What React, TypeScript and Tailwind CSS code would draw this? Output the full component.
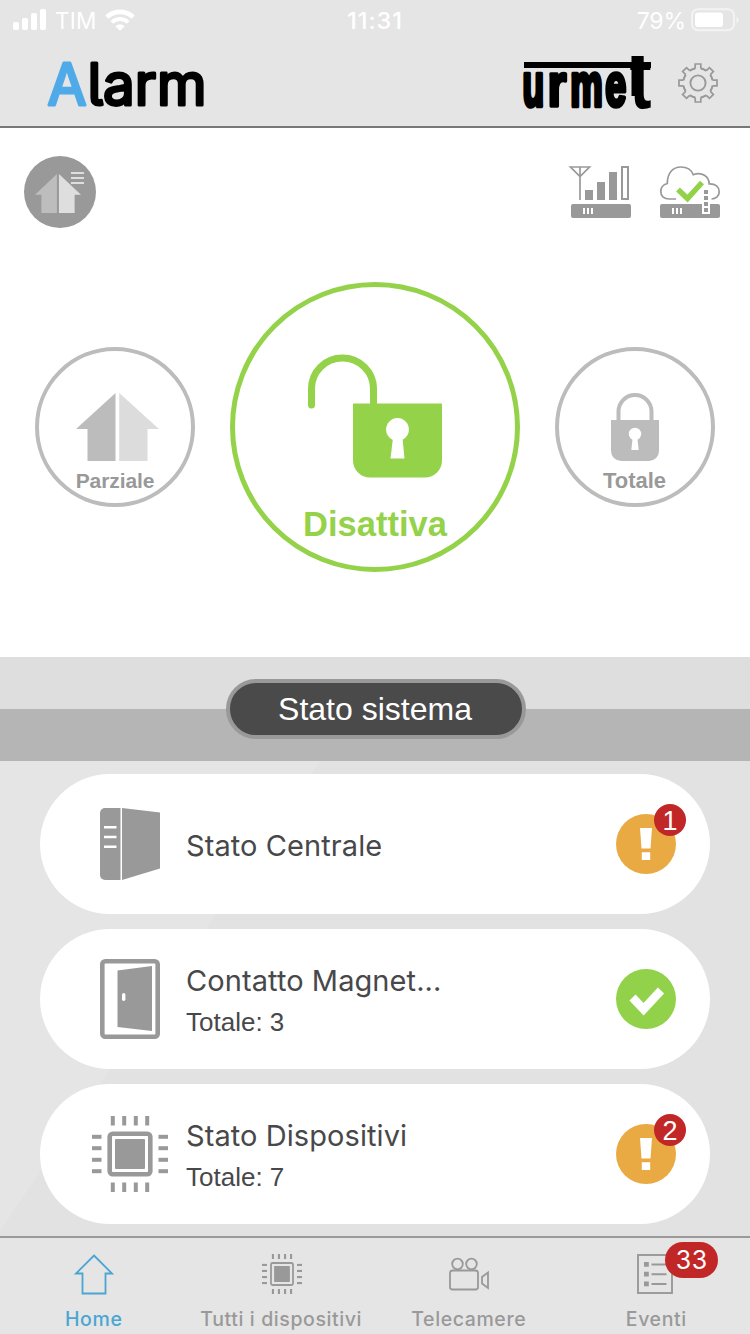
import type { ReactNode } from 'react';

const INTER = "font-['Inter','Noto_Sans',sans-serif]";
const HELV = "font-['Liberation_Sans',Arial,sans-serif]";

function StatusBar() {
  return (
    <div className="flex h-10 items-center text-white">
      <div className="flex w-[250px] items-center pl-3">
        <svg width="36" height="24" viewBox="0 0 36 24" fill="#fff">
          <rect x="1" y="14" width="6" height="8" rx="1.8" />
          <rect x="10" y="10" width="6" height="12" rx="1.8" />
          <rect x="19" y="5" width="6" height="17" rx="1.8" />
          <rect x="28" y="1" width="6" height="21" rx="1.8" />
        </svg>
        <span className="ml-[7px] w-[50px] pt-px text-[22.500px] leading-6 tracking-[0.2px]">TIM</span>
        <svg width="30" height="24" viewBox="0 0 30 24" fill="none" stroke="#fff">
          <path d="M1.8 9.2a19 19 0 0 1 26.400 0" strokeWidth="4.600" />
          <path d="M6.800 14.400a11.500 11.500 0 0 1 16.400 0" strokeWidth="4" />
          <path d="M10.300 18.200a6.800 6.800 0 0 1 9.400 0L15 22.800Z" fill="#fff" stroke="none" />
        </svg>
      </div>
      <div className="w-[250px] pt-[2px] text-center text-[23.500px] font-medium leading-6 tracking-[1px]">11:31</div>
      <div className="flex w-[250px] items-center justify-end pr-[10px]">
        <span className="mr-[4px] pt-[2px] text-[23px] leading-6 tracking-[-0.1px]">79%</span>
        <svg width="50" height="24" viewBox="0 0 50 24">
          <rect x="2" y="1.200" width="42" height="21" rx="6" fill="none" stroke="#f3f3f3" strokeWidth="2" />
          <rect x="5" y="4.500" width="28" height="14.500" rx="3" fill="#fff" />
          <path d="M46.500 8.500c3 1.500 3 5.500 0 7Z" fill="#f3f3f3" />
        </svg>
      </div>
    </div>
  );
}

function AlarmLogo() {
  return (
    <svg className="overflow-visible" width="170" height="60" viewBox="0 0 170 60" fontFamily="Inter, sans-serif" fontSize="58" fontWeight="400" strokeLinejoin="round" strokeWidth="3">
      <text x="7.500" y="52" textLength="39" lengthAdjust="spacingAndGlyphs" fill="#4faae8" stroke="#4faae8">A</text>
      <text className="[font-feature-settings:'cv05']" x="47.500" y="52" textLength="119" lengthAdjust="spacingAndGlyphs" fill="#000" stroke="#000">larm</text>
    </svg>
  );
}

function UrmetLogo() {
  return (
    <svg className="overflow-visible" width="130" height="60" viewBox="0 0 130 60">
      <clipPath id="logo-top">
        <rect x="100" y="3" width="30" height="54" />
      </clipPath>
      <g fontFamily="Liberation Sans, sans-serif" fontWeight="700" fontSize="61" stroke="#000" strokeWidth="4.600" strokeLinejoin="round">
        <text transform="translate(-.6 52.500) scale(.58 1)">u</text>
        <text transform="translate(24.500 52.500) scale(.8 1)" strokeWidth="3.600">r</text>
        <text transform="translate(47.200 52.500) scale(.6 1)">m</text>
        <text transform="translate(82.300 52.500) scale(.62 1)">e</text>
      </g>
      <g clipPath="url(#logo-top)">
        <text transform="translate(106.500 54.500) scale(.76 1)" fontFamily="Liberation Sans, sans-serif" fontWeight="700" fontSize="87">t</text>
      </g>
      <rect x="1" y="9" width="127" height="6" />
      <rect x="108.500" y="3" width="8" height="40" />
    </svg>
  );
}

function Gear() {
  const teeth = [0, 45, 90, 135, 180, 225, 270, 315];
  return (
    <svg width="42" height="42" viewBox="-21 -21 42 42" fill="none" stroke="#999" strokeWidth="1.700">
      <circle r="7.600" strokeWidth="1.900" />
      {teeth.map((a) => (
        <g key={a} transform={`rotate(${a})`}>
          <path d="M-2.800-14.600V-19H2.800V-14.600" />
          <path d="M2.800-14.600Q5.500-14 8.300-12.300" />
          <path d="M-2.800-14.600Q-5.500-14-8.300-12.300" />
        </g>
      ))}
    </svg>
  );
}

function House({ width, height, left, right }: { width: number; height: number; left: string; right: string }) {
  return (
    <svg width={width} height={height} viewBox="0 0 83 68" preserveAspectRatio="none">
      <path d="M39.500 0V68H11.500V36H0Z" fill={left} />
      <path d="M43.200 0V68H71.500V36H83Z" fill={right} />
    </svg>
  );
}

function SignalIcon() {
  return (
    <svg width="64" height="56" viewBox="0 0 64 56" fill="#999">
      <path d="M2.500 3H21.500L12 12.500ZM12 3V36" fill="none" stroke="#999" strokeWidth="1.700" />
      <rect x="17" y="26" width="8" height="10" />
      <rect x="29" y="18" width="8" height="18" />
      <rect x="41" y="8" width="8" height="28" />
      <rect x="54" y="3" width="6" height="32" fill="none" stroke="#999" strokeWidth="2" />
      <rect x="3" y="40" width="60" height="14" rx="2" />
      <path d="M15 44h2v6h-2zM19 44h2v6h-2zM23 44h2v6h-2z" fill="#fff" />
    </svg>
  );
}

function CloudIcon() {
  return (
    <svg width="62" height="56" viewBox="0 0 62 56">
      <path d="M17 35H10.500C4.500 35 1.800 31.500 1.800 27.700C1.800 23.500 4.500 20.500 8.300 19.500C8.300 9 14 3 21.700 3C27.500 3 32.500 6 34.300 10.700C43 7.500 50 12.500 50.200 19.800C56.500 19.500 60.200 23 60.200 27.700C60.200 32 57 35 52.500 35" fill="none" stroke="#999" strokeWidth="1.700" />
      <rect x="1" y="40" width="60" height="14" rx="2" fill="#999" />
      <path d="M13 44h2v6h-2zM17 44h2v6h-2zM21 44h2v6h-2z" fill="#fff" />
      <rect x="43" y="24" width="8" height="26" fill="#fff" />
      <path d="M45 26h4v4h-4zM45 32h4v4h-4zM45 38h4v4h-4zM45 44h4v4h-4z" fill="#999" />
      <path d="M19 25.500 28.500 34.500 43 18.500" fill="none" stroke="#92d14a" strokeWidth="5.500" />
    </svg>
  );
}

function OpenLock() {
  return (
    <svg width="136" height="126" viewBox="0 0 136 126">
      <path d="M4.500 51V34.500a31 30.500 0 0 1 62 0V52" fill="none" stroke="#94d24a" strokeWidth="7" strokeLinecap="round" />
      <path d="M46 49.500h89v57a17 17 0 0 1-17 17H63a17 17 0 0 1-17-17Z" fill="#94d24a" />
      <circle cx="90.500" cy="75.500" r="11.400" fill="#fff" />
      <path d="M86 84h9.500l2 20.500h-14Z" fill="#fff" />
    </svg>
  );
}

function ClosedLock() {
  return (
    <svg width="50" height="70" viewBox="0 0 50 70">
      <path d="M8.500 30V19.500a16.500 16.500 0 0 1 33 0V30" fill="none" stroke="#bcbcbc" strokeWidth="4" />
      <path d="M1 28h48v31a10 10 0 0 1-10 10H11a10 10 0 0 1-10-10Z" fill="#bcbcbc" />
      <circle cx="25" cy="42" r="6.200" fill="#fff" />
      <path d="M22.500 47h5l1.200 11h-7.400Z" fill="#fff" />
    </svg>
  );
}

function PanelIcon() {
  return (
    <svg width="60" height="72" viewBox="0 0 60 72" fill="#999">
      <path d="M20.500 0V72H5a5 5 0 0 1-5-5V5a5 5 0 0 1 5-5Z" />
      <path d="M22 0 60 4.500V60.500L22 72Z" />
      <path d="M4 18h12.500v2.600H4zM4 27.700h12.500v2.600H4zM4 37.400h12.500V40H4z" fill="#fff" />
    </svg>
  );
}

function DoorIcon() {
  return (
    <svg width="60" height="80" viewBox="0 0 60 80" fill="#999">
      <rect x="2.300" y="2.300" width="55.400" height="75.400" rx="3" fill="none" stroke="#999" strokeWidth="4.600" />
      <path d="M17.500 11.500 52 7V72L17.500 68Z" />
      <rect x="22" y="34" width="3.400" height="8" rx="1.700" fill="#fff" />
    </svg>
  );
}

const PINS = [18.800, 30.200, 41.800, 53.200];

function ChipIcon({ size, frame }: { size: number; frame: number }) {
  return (
    <svg width={size} height={size} viewBox="0 0 76 76" fill="#999">
      <rect x={15.400 + frame / 2} y={15.400 + frame / 2} width={45.200 - frame} height={45.200 - frame} rx="3" fill="none" stroke="#999" strokeWidth={frame} />
      <rect x="23" y="23" width="30" height="30" rx="1" />
      {PINS.map((p) => (
        <g key={p}>
          <rect x={p} y="0" width="4" height="9.500" />
          <rect x={p} y="66.500" width="4" height="9.500" />
          <rect x="0" y={p} width="9.500" height="4" />
          <rect x="66.500" y={p} width="9.500" height="4" />
        </g>
      ))}
    </svg>
  );
}

function Warning({ count }: { count: number }) {
  return (
    <div className="relative size-[60px]">
      <svg width="60" height="60" viewBox="0 0 60 60">
        <circle cx="30" cy="30" r="30" fill="#e9aa43" />
        <path d="M24 14h12l-1.500 20.500h-9ZM25.800 38.300h8.400V46h-8.400Z" fill="#fff" />
      </svg>
      <span className={`absolute -top-[10px] left-[38px] flex size-8 items-center justify-center rounded-full bg-[#c22727] pt-px text-[27px] leading-8 text-white ${HELV}`}>{count}</span>
    </div>
  );
}

function Ok() {
  return (
    <svg width="60" height="60" viewBox="0 0 60 60">
      <circle cx="30" cy="30" r="30" fill="#92d14a" />
      <path d="M16.500 28.500 27.600 40.200 45 21.500" fill="none" stroke="#fff" strokeWidth="8.500" />
    </svg>
  );
}

function StatusCard({ icon, title, total, state }: { icon: ReactNode; title: string; total?: string; state: ReactNode }) {
  return (
    <div className="flex h-[140px] items-center rounded-[70px] bg-white pl-[50px] pr-[34px]">
      <div className="flex w-20 justify-center">{icon}</div>
      <div className="ml-4 flex-1 whitespace-nowrap text-[#48484a]">
        <div className={`text-[29px] leading-9 tracking-[0.08px] ${total ? 'pt-[2px]' : 'pt-1'}`}>{title}</div>
        {total && <div className={`mt-[7px] text-[26px] leading-8 ${HELV}`}>{total}</div>}
      </div>
      {state}
    </div>
  );
}

function Tab({ label, active, children }: { label: string; active?: boolean; children: ReactNode }) {
  return (
    <div className={`flex flex-1 flex-col items-center pt-[14px] ${active ? 'text-[#4ba5d3]' : 'text-[#999]'}`}>
      <div className="flex h-[44px] items-center justify-center">{children}</div>
      <span className="mt-[11px] whitespace-nowrap text-[19.500px] font-medium leading-6 tracking-[0.600px]">{label}</span>
    </div>
  );
}

export default function App() {
  return (
    <div className={`flex h-[1334px] w-[750px] flex-col overflow-hidden bg-white ${INTER}`}>
      <header className="h-32 border-b-2 border-[#777] bg-[#e5e5e5]">
        <StatusBar />
        <div className="flex items-start pl-10 pt-[13px]">
          <AlarmLogo />
          <div className="ml-auto flex items-start pr-[31px]">
            <UrmetLogo />
            <div className="ml-[24px] pt-[9px]"><Gear /></div>
          </div>
        </div>
      </header>

      <main className="h-[529px]">
        <div className="flex h-[154px] items-start pl-6 pr-[29px] pt-7">
          <div className="relative flex size-[72px] items-center justify-center rounded-full bg-[#999] pr-[4px] pt-[3px]">
            <House width={46} height={39} left="#bdbdbd" right="#dedede" />
            <svg className="absolute left-[47px] top-4" width="13" height="12" viewBox="0 0 13 12">
              <path d="M0 1h13M0 6h13M0 11h13" stroke="#dedede" strokeWidth="2" />
            </svg>
          </div>
          <div className="ml-auto flex gap-[27px] pt-[8px]">
            <SignalIcon />
            <CloudIcon />
          </div>
        </div>
        <div className={`flex items-center justify-between px-[35px] font-bold ${HELV}`}>
          <div className="flex size-40 flex-col items-center rounded-full border-4 border-[#bcbcbc] pt-[42px]">
            <div className="pl-[4px]"><House width={83} height={68} left="#bcbcbc" right="#dcdcdc" /></div>
            <span className="mt-[8px] text-[21px] leading-6 tracking-[-0.1px] text-[#999]">Parziale</span>
          </div>
          <div className="flex size-[290px] flex-col items-center rounded-full border-[5px] border-[#94d24a] pt-[67px]">
            <OpenLock />
            <span className="mt-[24px] text-[34.500px] leading-10 text-[#94d24a]">Disattiva</span>
          </div>
          <div className="flex size-40 flex-col items-center rounded-full border-4 border-[#bcbcbc] pt-[41px]">
            <ClosedLock />
            <span className="mt-[7px] pr-px text-[22px] leading-6 text-[#999]">Totale</span>
          </div>
        </div>
      </main>

      <section className="flex h-[104px] items-center justify-center bg-linear-to-b from-[#dedede] from-50% to-[#b5b5b5] to-50% pl-[2px]">
        <h2 className={`flex h-[60px] w-[300px] items-center justify-center rounded-full border-4 border-[#999] bg-[#4a4a4a] pb-px pr-[2px] text-[32px] text-white ${HELV}`}>Stato sistema</h2>
      </section>

      <section className="relative h-[475px] bg-[#e2e2e2]">
        <div className="absolute inset-0 bg-[#e5e5e5] [clip-path:polygon(0_0,320px_0,0_470px)]" />
        <div className="relative flex flex-col gap-[15px] px-10 pt-[13px]">
          <StatusCard icon={<PanelIcon />} title="Stato Centrale" state={<Warning count={1} />} />
          <StatusCard icon={<DoorIcon />} title="Contatto Magnet..." total="Totale: 3" state={<Ok />} />
          <StatusCard icon={<ChipIcon size={76} frame={4.6} />} title="Stato Dispositivi" total="Totale: 7" state={<Warning count={2} />} />
        </div>
      </section>

      <nav className="flex h-[98px] border-t-2 border-[#999] bg-[#e5e5e5]">
        <Tab label="Home" active>
          <svg width="42" height="44" viewBox="0 0 42 44">
            <path d="M21 3.500 39 21.500H32.500V41.500H9.500V21.500H3Z" fill="none" stroke="#4ba5d3" strokeWidth="1.800" />
          </svg>
        </Tab>
        <Tab label="Tutti i dispositivi">
          <div className="pl-[2px]"><ChipIcon size={40} frame={3.4} /></div>
        </Tab>
        <Tab label="Telecamere">
          <svg width="42" height="44" viewBox="0 0 42 44" fill="none" stroke="#999" strokeWidth="1.800">
            <circle cx="9.500" cy="12" r="5.300" />
            <circle cx="23.500" cy="12" r="5.300" />
            <rect x="2" y="18.500" width="28" height="19" rx="2.500" />
            <path d="M40 20.500V36L34 31.500V25Z" />
          </svg>
        </Tab>
        <Tab label="Eventi">
          <div className="relative mr-[2px]">
            <svg width="36" height="44" viewBox="0 0 36 44" fill="none" stroke="#999" strokeWidth="1.900">
              <rect x="1" y="3" width="34" height="38" />
              <path d="M14.500 12.500h15M14.500 22.300h15M14.500 32h15" />
              <path d="M7 10h4.800v4.800H7zM7 19.800h4.800v4.800H7zM7 29.500h4.800v4.800H7z" fill="#999" stroke="none" />
            </svg>
            <span className="absolute -top-[10px] left-[28px] flex h-9 w-[53px] items-center justify-center rounded-full bg-[#c22727] text-[25px] leading-9 tracking-[0.6px] text-white">33</span>
          </div>
        </Tab>
      </nav>
    </div>
  );
}
